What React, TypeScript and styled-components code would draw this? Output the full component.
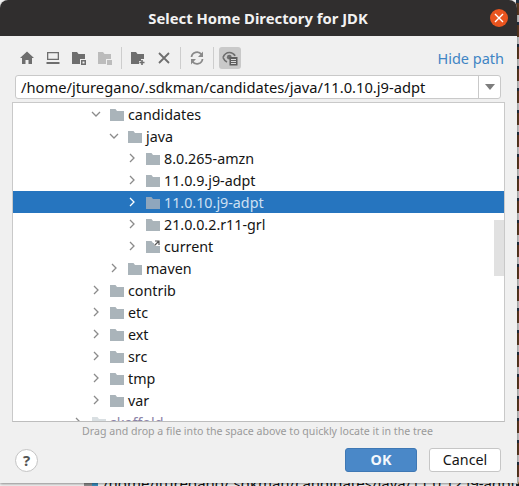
import React from "react";
import styled, { createGlobalStyle } from "styled-components";

const Global = createGlobalStyle`
  html, body { margin: 0; padding: 0; background: #fff; }
  * { box-sizing: border-box; }
`;

const FONT = `"Noto Sans", "Open Sans", sans-serif`;

const Desktop = styled.div`
  position: relative;
  width: 519px;
  height: 486px;
  overflow: hidden;
  background: #f4f4f4;
  font-family: ${FONT};
`;

const BackdropStripe = styled.div`
  position: absolute;
  top: 0;
  right: 0;
  width: 3px;
  height: 486px;
  background: repeating-linear-gradient(180deg, #20303f 0 3px, #5a3a22 3px 15px, #c4c4c4 15px 22px);
`;

const BackdropRow = styled.div`
  position: absolute;
  left: 84px;
  top: 473px;
  display: flex;
  align-items: center;
  gap: 5px;
  white-space: nowrap;
  font-size: 15px;
  color: #111;
`;

const BackdropIcon = styled.span`
  display: block;
  width: 14px;
  height: 14px;
  background: linear-gradient(90deg, #8f8f8f 0 8px, #3a8fc0 8px 14px);
`;

const Dialog = styled.div`
  position: relative;
  width: 517px;
  height: 483px;
  display: flex;
  flex-direction: column;
  background: #f0f0f0;
  border-radius: 8px 8px 0 0;
  box-shadow: 0 1px 3px rgba(0, 0, 0, 0.45);
  overflow: hidden;
`;

const TitleBar = styled.div`
  height: 36px;
  flex: none;
  display: flex;
  align-items: center;
  justify-content: center;
  position: relative;
  background: #302e2e;
  padding-right: 1px;
`;

const Title = styled.div`
  color: #f2f2f2;
  font-size: 14.8px;
  font-weight: 700;
  white-space: nowrap;
`;

const CloseButton = styled.div`
  position: absolute;
  right: 9px;
  top: 9px;
  width: 18px;
  height: 18px;
  border-radius: 50%;
  background: #e9541f;
  display: flex;
  align-items: center;
  justify-content: center;
`;

const Toolbar = styled.div`
  display: flex;
  align-items: center;
  height: 22px;
  margin: 11px 13px 0 14px;
`;

const ToolButton = styled.div<{ $active?: boolean }>`
  width: 22px;
  height: 22px;
  margin: 0 2px;
  border-radius: 3px;
  display: flex;
  align-items: center;
  justify-content: center;
  background: ${(p) => (p.$active ? "#c9c9c9" : "transparent")};
`;

const Separator = styled.div`
  width: 1px;
  height: 22px;
  margin: 0 3px;
  background: #cdcdcd;
`;

const HidePath = styled.div`
  margin-left: auto;
  color: #3f85c4;
  font-size: 14.5px;
  white-space: nowrap;
`;

const PathField = styled.div`
  height: 24px;
  margin: 6px 16px 0 15px;
  display: flex;
  background: #fff;
  border: 1px solid #c9c9c9;
  border-radius: 3px;
  flex: none;
`;

const PathText = styled.div`
  flex: 1;
  padding-left: 5px;
  color: #111;
  font-size: 14.7px;
  line-height: 22px;
  white-space: nowrap;
  overflow: hidden;
`;

const PathArrow = styled.div`
  width: 22px;
  flex: none;
  border-left: 1px solid #c9c9c9;
  display: flex;
  align-items: center;
  justify-content: center;
`;

const Tree = styled.div`
  position: relative;
  height: 320px;
  margin: 3px 12px 0 12px;
  flex: none;
  background: #fff;
  border: 1px solid #c9c9c9;
  border-bottom-color: #bdbdbd;
  overflow: hidden;
`;

const Row = styled.div<{ $level: number; $selected?: boolean; $dim?: boolean }>`
  height: 22px;
  display: flex;
  align-items: center;
  padding-left: ${(p) => 57 + p.$level * 18}px;
  font-size: 14.3px;
  white-space: nowrap;
  background: ${(p) => (p.$selected ? "#2675bf" : "transparent")};
  color: ${(p) => (p.$selected ? "#cfe0f2" : p.$dim ? "#8d84a8" : "#151515")};
`;

const ChevronBox = styled.span`
  width: 16px;
  height: 22px;
  flex: none;
  display: flex;
  align-items: center;
  justify-content: center;
`;

const FolderBox = styled.span`
  width: 14px;
  height: 14px;
  margin: 0 4px 0 6px;
  flex: none;
  display: block;
`;

const ScrollThumb = styled.div`
  position: absolute;
  right: 0;
  top: 117px;
  width: 10px;
  height: 56px;
  background: #e1e1e1;
`;

const Hint = styled.div`
  margin-top: 1px;
  height: 16px;
  text-align: center;
  color: #9a9a9a;
  font-size: 10.6px;
  line-height: 16px;
  padding-right: 2px;
  white-space: nowrap;
`;

const Footer = styled.div`
  display: flex;
  align-items: center;
  margin: 9px 16px 0 15px;
  height: 24px;
`;

const HelpButton = styled.div`
  width: 23px;
  height: 23px;
  border: 1px solid #c4c4c4;
  border-radius: 50%;
  background: #fff;
  color: #555;
  font-size: 15px;
  font-weight: 700;
  line-height: 21px;
  text-align: center;
`;

const DialogButton = styled.div<{ $primary?: boolean }>`
  width: 72px;
  height: 24px;
  border-radius: 3px;
  border: 1px solid ${(p) => (p.$primary ? "#3f78b4" : "#c6c6c6")};
  background: ${(p) => (p.$primary ? "#4a88c8" : "#fff")};
  color: ${(p) => (p.$primary ? "#f4f8fc" : "#151515")};
  font-size: 14.3px;
  font-weight: ${(p) => (p.$primary ? 700 : 400)};
  line-height: 22px;
  text-align: center;
  margin-left: ${(p) => (p.$primary ? "auto" : "12px")};
`;

const Chevron = ({ open, color = "#8b8b8b" }: { open?: boolean; color?: string }) => (
  <svg width="10" height="10" viewBox="0 0 10 10" fill="none">
    <path d={open ? "M1 3l4 4 4-4" : "M3 1l4 4-4 4"} stroke={color} strokeWidth="1.3" />
  </svg>
);

const Folder = ({ link, color = "#aab4ba" }: { link?: boolean; color?: string }) => (
  <FolderBox>
    <svg width="14" height="14" viewBox="0 0 14 14">
      <path d="M0 1h5.5l1.5 2h7v10H0z" fill={color} />
      {link && (
        <>
          <path d="M8 0h6v6H8z" fill="#fff" />
          <path d="M8.5 5.5l4-4M9 1h4v4" stroke="#555" strokeWidth="1.2" fill="none" />
        </>
      )}
    </svg>
  </FolderBox>
);

const Icon = ({ children }: { children: React.ReactNode }) => (
  <svg width="16" height="16" viewBox="0 0 16 16">
    {children}
  </svg>
);

const G = "#6e6e6e";

const rows: { name: string; level: number; open?: boolean; selected?: boolean; link?: boolean; dim?: boolean }[] = [
  { name: "candidates", level: 1, open: true },
  { name: "java", level: 2, open: true },
  { name: "8.0.265-amzn", level: 3 },
  { name: "11.0.9.j9-adpt", level: 3 },
  { name: "11.0.10.j9-adpt", level: 3, selected: true },
  { name: "21.0.0.2.r11-grl", level: 3 },
  { name: "current", level: 3, link: true },
  { name: "maven", level: 2 },
  { name: "contrib", level: 1 },
  { name: "etc", level: 1 },
  { name: "ext", level: 1 },
  { name: "src", level: 1 },
  { name: "tmp", level: 1 },
  { name: "var", level: 1 },
  { name: "skaffold", level: 0, dim: true },
];

export default function App() {
  return (
    <Desktop>
      <Global />
      <BackdropStripe />
      <BackdropRow>
        <BackdropIcon />
        <span>/home/jturegano/.sdkman/candidates/java/11.0.12.j9-adpt/</span>
      </BackdropRow>
      <Dialog>
        <TitleBar>
          <Title>Select Home Directory for JDK</Title>
          <CloseButton>
            <svg width="10" height="10" viewBox="0 0 10 10">
              <path d="M1 1l8 8M9 1l-8 8" stroke="#fff" strokeWidth="1.4" />
            </svg>
          </CloseButton>
        </TitleBar>
        <Toolbar>
          <ToolButton>
            <Icon>
              <path d="M8 1.5L1 8h2v6h3.5v-4h3v4H13V8h2z" fill={G} />
            </Icon>
          </ToolButton>
          <ToolButton>
            <Icon>
              <path d="M2 2h12v8H2zM3.3 3.3v5.4h9.4V3.3zM1.5 12h13v2h-13z" fill={G} fillRule="evenodd" />
            </Icon>
          </ToolButton>
          <ToolButton>
            <Icon>
              <path d="M1 2h5l1.5 2H14v5H9v5H1z" fill={G} />
              <path d="M10 10h5v5h-5zM11.5 11.5v2h2v-2z" fill={G} fillRule="evenodd" />
            </Icon>
          </ToolButton>
          <ToolButton>
            <Icon>
              <path d="M1 2h5l1.5 2H14v5H9v5H1z" fill="#bcbcbc" />
              <path d="M10 10h5v5h-5z" fill="#bcbcbc" />
            </Icon>
          </ToolButton>
          <Separator />
          <ToolButton>
            <Icon>
              <path d="M1 2h5l1.5 2H14v5h-3v2H9v3H1z" fill={G} />
              <path d="M12 10v5M9.5 12.5h5" stroke={G} strokeWidth="1.6" />
            </Icon>
          </ToolButton>
          <ToolButton>
            <Icon>
              <path d="M3 3l10 10M13 3L3 13" stroke={G} strokeWidth="1.8" />
            </Icon>
          </ToolButton>
          <Separator />
          <ToolButton>
            <Icon>
              <path d="M2.5 7A5.5 5.5 0 0 1 12.5 4.5" stroke="#8a8a8a" strokeWidth="1.8" fill="none" />
              <path d="M14 1.5V7H9z" fill="#8a8a8a" />
              <path d="M13.5 9A5.5 5.5 0 0 1 3.5 11.5" stroke="#8a8a8a" strokeWidth="1.8" fill="none" />
              <path d="M2 14.5V9h5z" fill="#8a8a8a" />
            </Icon>
          </ToolButton>
          <Separator />
          <ToolButton $active>
            <Icon>
              <path
                d="M1 7.5C2.3 4.3 4.8 2.5 7.5 2.5c2.2 0 4.2 1.1 5.7 3.2"
                stroke={G}
                strokeWidth="1.7"
                fill="none"
              />
              <path d="M1 7.5c.9 2.2 2.3 3.7 4 4.5" stroke={G} strokeWidth="1.7" fill="none" />
              <circle cx="7.3" cy="7.2" r="2.4" fill={G} />
              <path d="M7.5 7h8v8.5h-8z" fill="#5d5d5d" />
              <path d="M9 9.5h5M9 11.5h5M9 13.5h5" stroke="#d8d8d8" strokeWidth="1" />
            </Icon>
          </ToolButton>
          <HidePath>Hide path</HidePath>
        </Toolbar>
        <PathField>
          <PathText>/home/jturegano/.sdkman/candidates/java/11.0.10.j9-adpt</PathText>
          <PathArrow>
            <svg width="10" height="6" viewBox="0 0 10 6">
              <path d="M0 0h10L5 6z" fill="#7d7d7d" />
            </svg>
          </PathArrow>
        </PathField>
        <Tree>
          {rows.map((r) => (
            <Row key={r.name} $level={r.level} $selected={r.selected} $dim={r.dim}>
              <ChevronBox>
                <Chevron open={r.open} color={r.selected ? "#ffffff" : "#8b8b8b"} />
              </ChevronBox>
              <Folder link={r.link} color={r.selected ? "#8fa6bd" : r.dim ? "#d9dfe2" : "#aab4ba"} />
              <span>{r.name}</span>
            </Row>
          ))}
          <ScrollThumb />
        </Tree>
        <Hint>Drag and drop a file into the space above to quickly locate it in the tree</Hint>
        <Footer>
          <HelpButton>?</HelpButton>
          <DialogButton $primary>OK</DialogButton>
          <DialogButton>Cancel</DialogButton>
        </Footer>
      </Dialog>
    </Desktop>
  );
}
